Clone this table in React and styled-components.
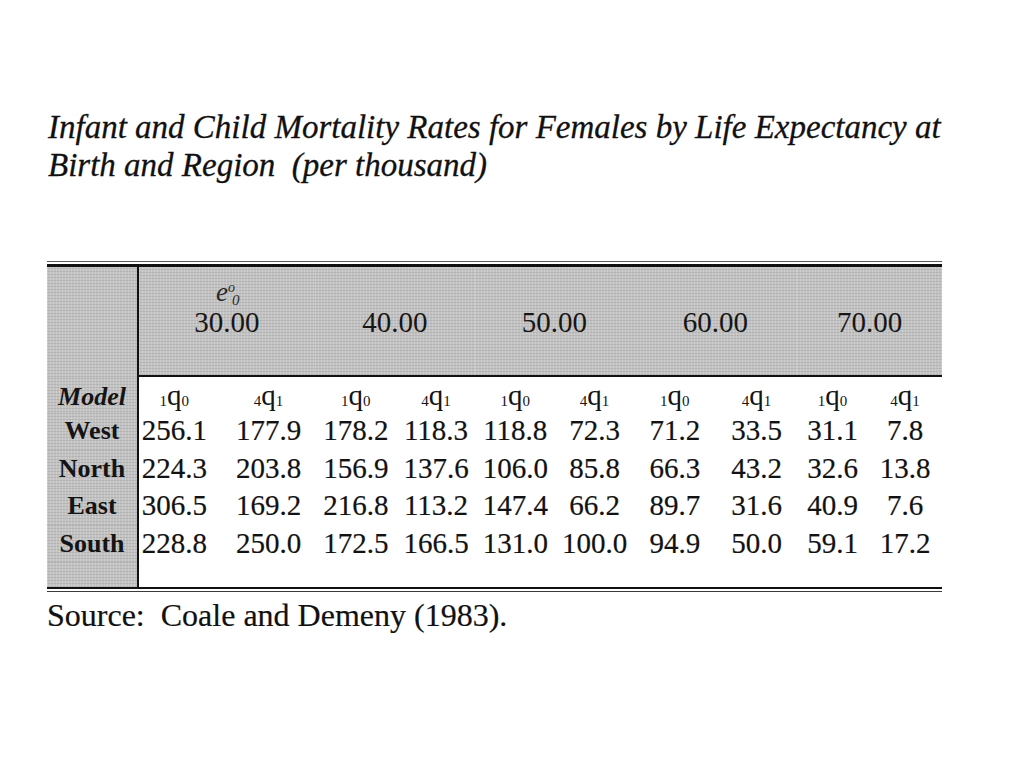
import React from "react";
import styled, { createGlobalStyle } from "styled-components";

const GlobalStyle = createGlobalStyle`
  html, body { margin: 0; padding: 0; background: #ffffff; }
  body { font-family: "Liberation Serif", "Times New Roman", serif; color: #141414; }
`;

const COLS = [
  { w: 83.5, shift: 13 },
  { w: 92, shift: 0 },
  { w: 82.5, shift: 0 },
  { w: 78, shift: 0 },
  { w: 80.5, shift: 0 },
  { w: 78, shift: 0 },
  { w: 82.5, shift: 0 },
  { w: 81, shift: 0 },
  { w: 71, shift: 0 },
  { w: 74, shift: 0 },
];

const shade = `
  background-color: #c2c2c2;
  background-image:
    repeating-linear-gradient(0deg, rgba(0,0,0,0.08) 0 1px, transparent 1px 3px),
    repeating-linear-gradient(90deg, rgba(255,255,255,0.2) 0 1px, transparent 1px 3px);
`;

const Page = styled.div`
  width: 895px;
  padding: 108px 0 60px 47px;
`;

const Title = styled.h1`
  margin: 0 0 0 1px;
  font-family: "Liberation Serif", "Times New Roman", serif;
  font-style: italic;
  font-weight: normal;
  font-size: 33px;
  line-height: 38px;
  color: #111;
  -webkit-text-stroke: 0.3px #111;
`;

const TopRule = styled.div`
  margin-top: 77px;
  height: 2px;
  border-top: 1px solid #5a5a5a;
  border-bottom: 3px solid #111;
`;

const BottomRule = styled.div`
  height: 2px;
  border-top: 2px solid #111;
  border-bottom: 1px solid #3a3a3a;
`;

const Grid = styled.div`
  display: grid;
  grid-template-columns: 92px ${COLS.map((c) => c.w + "px").join(" ")};
  grid-template-rows: 110px 35px repeat(4, 37.5px) 25px;
`;

const LabelCell = styled.div`
  ${shade}
  box-sizing: border-box;
  border-right: 2px solid #111;
  text-align: center;
  font-weight: bold;
  font-size: 26px;
  line-height: 37.5px;
  font-style: ${(p) => (p.$italic ? "italic" : "normal")};
  padding-top: ${(p) => (p.$italic ? "1px" : "0")};
  color: #141414;
`;

const YearCell = styled.div`
  ${shade}
  grid-column: span 2;
  box-sizing: border-box;
  border-bottom: 2px solid #111;
  display: flex;
  flex-direction: column;
  align-items: center;
  padding-top: ${(p) => (p.$withSymbol ? "13px" : "38px")};
  font-size: 29px;
  line-height: 34px;
  color: #161616;
`;

const Symbol = styled.div`
  align-self: flex-start;
  margin-left: 77px;
  height: 25px;
  font-style: italic;
  font-size: 27px;
  line-height: 25px;
  color: #2a2a2a;
  sup {
    font-size: 14px;
    vertical-align: 9px;
    line-height: 0;
  }
  sub {
    font-size: 15px;
    vertical-align: -4px;
    line-height: 0;
    margin-left: -3px;
  }
`;

const QCell = styled.div`
  text-align: center;
  padding-right: ${(p) => p.$shift}px;
  font-size: 29px;
  line-height: 37px;
  color: #141414;
  sub {
    font-size: 15px;
    vertical-align: -1px;
    line-height: 0;
  }
`;

const ValueCell = styled.div`
  text-align: center;
  padding-right: ${(p) => p.$shift}px;
  font-size: 29px;
  line-height: 37.5px;
  color: #121212;
  white-space: nowrap;
  -webkit-text-stroke: 0.2px #121212;
`;

const Source = styled.p`
  margin: 6px 0 0 0;
  font-size: 32px;
  line-height: 34px;
  white-space: pre;
  color: #111;
  -webkit-text-stroke: 0.2px #111;
`;

const years = ["30.00", "40.00", "50.00", "60.00", "70.00"];

const rows = [
  ["West", ["256.1", "177.9", "178.2", "118.3", "118.8", "72.3", "71.2", "33.5", "31.1", "7.8"]],
  ["North", ["224.3", "203.8", "156.9", "137.6", "106.0", "85.8", "66.3", "43.2", "32.6", "13.8"]],
  ["East", ["306.5", "169.2", "216.8", "113.2", "147.4", "66.2", "89.7", "31.6", "40.9", "7.6"]],
  ["South", ["228.8", "250.0", "172.5", "166.5", "131.0", "100.0", "94.9", "50.0", "59.1", "17.2"]],
];

function QLabel({ pre, post }) {
  return (
    <>
      <sub>{pre}</sub>q<sub>{post}</sub>
    </>
  );
}

export default function App() {
  return (
    <Page>
      <GlobalStyle />
      <Title>
        Infant and Child Mortality Rates for Females by Life Expectancy at
        <br />
        Birth and Region{"\u00a0\u00a0"}(per thousand)
      </Title>
      <TopRule />
      <Grid>
        <LabelCell />
        {years.map((y, i) => (
          <YearCell key={y} $withSymbol={i === 0}>
            {i === 0 && (
              <Symbol>
                e<sup>o</sup>
                <sub>0</sub>
              </Symbol>
            )}
            <span>{y}</span>
          </YearCell>
        ))}

        <LabelCell $italic>Model</LabelCell>
        {COLS.map((c, i) => (
          <QCell key={"q" + i} $shift={c.shift}>
            {i % 2 === 0 ? <QLabel pre="1" post="0" /> : <QLabel pre="4" post="1" />}
          </QCell>
        ))}

        {rows.map(([name, vals]) => (
          <React.Fragment key={name}>
            <LabelCell>{name}</LabelCell>
            {vals.map((v, i) => (
              <ValueCell key={name + i} $shift={COLS[i].shift}>
                {v}
              </ValueCell>
            ))}
          </React.Fragment>
        ))}

        <LabelCell />
      </Grid>
      <BottomRule />
      <Source>{"Source:  Coale and Demeny (1983)."}</Source>
    </Page>
  );
}
